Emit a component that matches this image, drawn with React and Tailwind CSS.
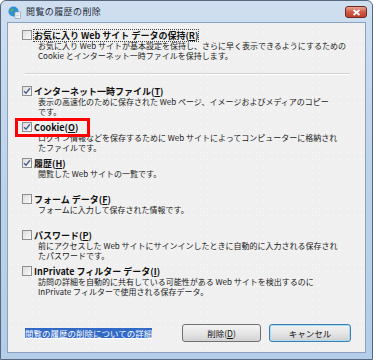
import React from 'react'

const jp = "font-['Noto_Sans_CJK_JP','Noto_Sans_CJK_SC',sans-serif]"

function CheckBox({ checked }) {
  return (
    <span className="w-[10px] h-[10px] shrink-0 border border-[#8e8f8f] bg-gradient-to-br from-[#dcdcdc] to-[#fafafa] flex items-center justify-center">
      {checked && (
        <svg width="8" height="8" viewBox="0 0 8 8">
          <path d="M1 4.2 L3 6.3 L7 1.2" fill="none" stroke="#4a5f97" strokeWidth="1.4" />
        </svg>
      )}
    </span>
  )
}

function Label({ before, mn, after = ')', focus }) {
  return (
    <span className={`text-[9px] font-bold leading-[11px] text-[#111] whitespace-nowrap ${focus ? 'outline outline-1 outline-dotted outline-[#444]' : ''}`}>
      {before}<span className="underline">{mn}</span>{after}
    </span>
  )
}

function Item({ checked, before, mn, lines, focus, mark, className = '' }) {
  return (
    <div className={`relative ${className}`}>
      {mark && <div className="absolute left-[7px] top-[-3px] w-[75px] h-[19px] border-[3px] border-[#ff0000]" />}
      <div className="flex items-center gap-[2px] h-[12px] pl-[14px]">
        <CheckBox checked={checked} />
        <Label before={before} mn={mn} focus={focus} />
      </div>
      <div className="pl-[30px] text-[8px] leading-[10px] text-[#222] whitespace-nowrap">
        {lines.map((l, i) => (
          <div key={i}>{l}</div>
        ))}
      </div>
    </div>
  )
}

function TitleIcon() {
  return (
    <svg width="13" height="13" viewBox="0 0 13 13">
      <circle cx="5.5" cy="5.5" r="5" fill="#2f8fd8" />
      <path d="M2 4 Q4 2 6 3 Q5 5 3 6 Z M6 7 Q8 6 9 8 Q7 10 6 9 Z" fill="#5bb84a" />
      <rect x="7" y="6" width="5.5" height="6.5" fill="#fff" stroke="#7a8a9a" strokeWidth="0.6" />
      <path d="M8 8 H11.5 M8 9.5 H11.5 M8 11 H11" stroke="#9aa" strokeWidth="0.5" />
    </svg>
  )
}

export default function App() {
  return (
    <div className={`w-[373px] h-[360px] ${jp} bg-white`}>
      <div className="w-full h-full flex flex-col border border-[#56687d] rounded-t-[6px] bg-gradient-to-b from-[#cfdff0] via-[#bcd3ea] to-[#b4cde8] px-[6px] pb-[6px]">
        <div className="h-[21px] flex items-center shrink-0">
          <div className="ml-[1px] mt-[1px]">
            <TitleIcon />
          </div>
          <span className="ml-[5px] text-[9px] text-[#1e2b3a] tracking-[0.4px]">閲覧の履歴の削除</span>
          <div className="ml-auto mr-[-1px] mt-[1px] w-[22px] h-[12px] rounded-[3px] border border-[#6d2a22] bg-gradient-to-b from-[#e8a494] via-[#cf5a44] to-[#c0402c] flex items-center justify-center">
            <svg width="9" height="7" viewBox="0 0 9 7">
              <path d="M1.5 1 L7.5 6 M7.5 1 L1.5 6" stroke="#fff" strokeWidth="1.8" />
            </svg>
          </div>
        </div>
        <div className="flex-1 flex flex-col border border-[#8aa2bf] bg-[#f0f0f0] bg-[radial-gradient(#fbfbfb_0.7px,transparent_0.9px)] bg-[length:7px_7px] pt-[6px]">
          <Item
            before="お気に入り Web サイト データの保持("
            mn="R"
            focus
            lines={['お気に入り Web サイトが基本設定を保持し、さらに早く表示できるようにするための', 'Cookie とインターネット一時ファイルを保持します。']}
          />
          <div className="mt-[12px] mb-[10px] ml-[17px] mr-[15px] h-[2px] border-t border-[#d2d2d2] border-b border-b-white" />
          <Item
            checked
            className="h-[36px]"
            before="インターネット一時ファイル("
            mn="T"
            lines={['表示の高速化のために保存された Web ページ、イメージおよびメディアのコピー', 'です。']}
          />
          <Item
            checked
            mark
            className="h-[36px]"
            before="Cookie("
            mn="O"
            lines={['ログイン情報などを保存するために Web サイトによってコンピューターに格納され', 'たファイルです。']}
          />
          <Item checked className="h-[36px]" before="履歴(" mn="H" lines={['閲覧した Web サイトの一覧です。']} />
          <Item className="h-[36px]" before="フォーム データ(" mn="F" lines={['フォームに入力して保存された情報です。']} />
          <Item
            className="h-[36px]"
            before="パスワード("
            mn="P"
            lines={['前にアクセスした Web サイトにサインインしたときに自動的に入力される保存され', 'たパスワードです。']}
          />
          <Item
            className="h-[36px]"
            before="InPrivate フィルター データ("
            mn="I"
            lines={['訪問の詳細を自動的に共有している可能性がある Web サイトを検出するのに', 'InPrivate フィルターで使用される保存データ。']}
          />
          <div className="mt-auto pb-[10px] pl-[17px] pr-[14px] flex items-center h-[28px]">
            <span className="text-[8.5px] leading-[11px] bg-[#3169c6] text-white underline">閲覧の履歴の削除についての詳細</span>
            <button className="ml-auto w-[79px] h-[18px] rounded-[3px] border border-[#707070] bg-gradient-to-b from-[#f4f4f4] via-[#e6e6e6] to-[#d2d2d2] text-[8.5px] text-[#111]">
              削除(<span className="underline">D</span>)
            </button>
            <button className="ml-[8px] w-[82px] h-[18px] rounded-[3px] border border-[#3c7fb1] shadow-[inset_0_0_0_1px_#a8dcf5] bg-gradient-to-b from-[#f2f2f2] via-[#e6e6e6] to-[#d0d0d0] text-[8.5px] text-[#111]">
              キャンセル
            </button>
          </div>
        </div>
      </div>
    </div>
  )
}
